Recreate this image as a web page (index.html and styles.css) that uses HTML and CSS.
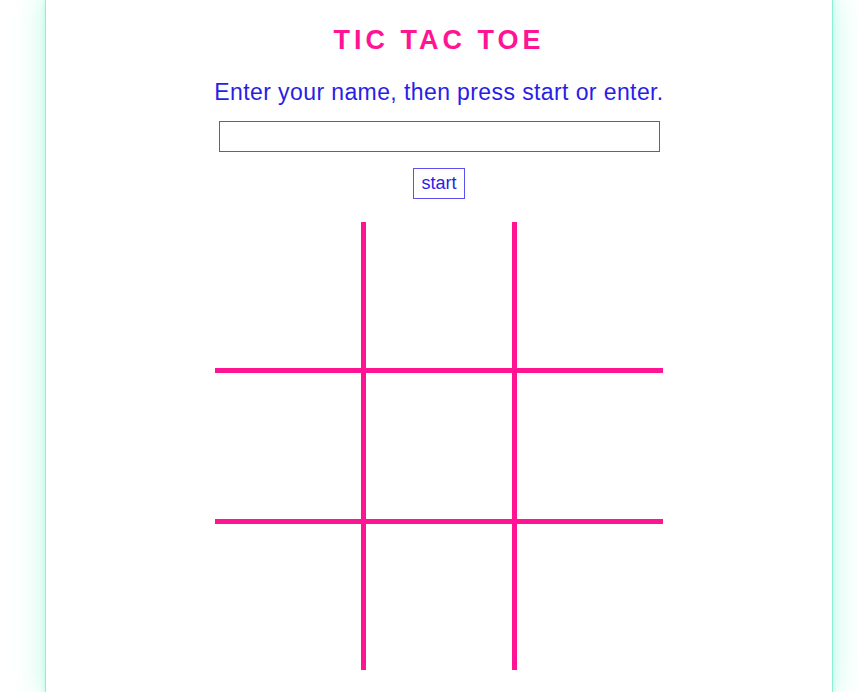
FILE: index.html
```html
<!DOCTYPE html>
<html>
<head>
<meta charset="utf-8">
<title>Tic Tac Toe</title>
<link rel="stylesheet" href="styles.css">
</head>
<body>
<main class="panel">
  <h1 class="title">TIC TAC TOE</h1>
  <p class="prompt">Enter your name, then press start or enter.</p>
  <input class="name-input" type="text" aria-label="Your name">
  <button class="start-btn" type="button">start</button>
  <div class="board">
    <div class="cell"></div><div class="cell"></div><div class="cell"></div>
    <div class="cell"></div><div class="cell"></div><div class="cell"></div>
    <div class="cell"></div><div class="cell"></div><div class="cell"></div>
  </div>
</main>
</body>
</html>
```

FILE: styles.css
```css
html, body {
  margin: 0;
  padding: 0;
  background: #ffffff;
  overflow: hidden;
}

body {
  font-family: "Liberation Sans", Arial, sans-serif;
}

.panel {
  box-sizing: border-box;
  width: 786px;
  min-height: 692px;
  margin-left: 46px;
  padding-top: 24px;
  background: #ffffff;
  box-shadow: 0 0 0 1px #8ef0d2, 0 0 6px 1px #b4f8e3, 0 0 30px 4px #cafcec;
  display: flex;
  flex-direction: column;
  align-items: center;
}

.title {
  margin: 0;
  font-size: 27px;
  line-height: 32px;
  font-weight: bold;
  letter-spacing: 4px;
  color: #ff1493;
}

.prompt {
  margin: 23px 0 0;
  font-size: 23px;
  line-height: 27px;
  letter-spacing: 0.4px;
  color: #2a1ee6;
}

.name-input {
  box-sizing: border-box;
  margin-top: 15px;
  width: 441px;
  height: 31px;
  border: 1px solid #5b50f2;
  border-radius: 0;
  padding: 0 4px;
  background: #ffffff;
  outline: none;
  font-family: inherit;
  font-size: 16px;
}

.start-btn {
  box-sizing: border-box;
  margin-top: 16px;
  height: 31px;
  padding: 0 7px;
  border: 1px solid #5b50f2;
  border-radius: 0;
  background: #ffffff;
  color: #2a1ee6;
  font-family: inherit;
  font-size: 18px;
  line-height: 29px;
}

.board {
  margin-top: 23px;
  width: 448px;
  height: 448px;
  display: grid;
  grid-template-columns: repeat(3, 1fr);
  grid-template-rows: repeat(3, 1fr);
  gap: 5px;
  background: #ff1493;
}

.cell {
  background: #ffffff;
}
```
